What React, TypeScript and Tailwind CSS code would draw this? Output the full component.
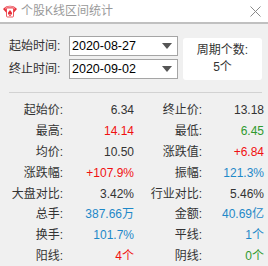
import React from 'react';

type Cell = { label: string; value: string; color: string };

const rows: [Cell, Cell][] = [
  [
    { label: '起始价:', value: '6.34', color: 'text-[#333333]' },
    { label: '终止价:', value: '13.18', color: 'text-[#333333]' },
  ],
  [
    { label: '最高:', value: '14.14', color: 'text-[#f01010]' },
    { label: '最低:', value: '6.45', color: 'text-[#2f9a2f]' },
  ],
  [
    { label: '均价:', value: '10.50', color: 'text-[#333333]' },
    { label: '涨跌值:', value: '+6.84', color: 'text-[#f01010]' },
  ],
  [
    { label: '涨跌幅:', value: '+107.9%', color: 'text-[#f01010]' },
    { label: '振幅:', value: '121.3%', color: 'text-[#1e88c8]' },
  ],
  [
    { label: '大盘对比:', value: '3.42%', color: 'text-[#333333]' },
    { label: '行业对比:', value: '5.46%', color: 'text-[#333333]' },
  ],
  [
    { label: '总手:', value: '387.66万', color: 'text-[#1e88c8]' },
    { label: '金额:', value: '40.69亿', color: 'text-[#1e88c8]' },
  ],
  [
    { label: '换手:', value: '101.7%', color: 'text-[#1e88c8]' },
    { label: '平线:', value: '1个', color: 'text-[#1e88c8]' },
  ],
  [
    { label: '阳线:', value: '4个', color: 'text-[#f01010]' },
    { label: '阴线:', value: '0个', color: 'text-[#2f9a2f]' },
  ],
];

const AppIcon = () => (
  <svg width="16" height="16" viewBox="0 0 16 16">
    <path d="M8 14 L1 6 A9 9 0 0 1 15 6 Z" fill="#e8303a" />
    <path d="M8 14 L3 5 A7 7 0 0 1 13 5 Z" fill="#f6a0a6" />
    <rect x="4.5" y="5" width="7" height="9" rx="1" fill="#ffffff" stroke="#e8303a" strokeWidth="0.8" />
    <path d="M8 7 C9 8.5 10.5 9.5 10 11 C9.6 12 8.5 11.8 8 11 C7.5 11.8 6.4 12 6 11 C5.5 9.5 7 8.5 8 7 Z" fill="#e8303a" />
    <path d="M8 11 L7 13 L9 13 Z" fill="#e8303a" />
  </svg>
);

const DateBox = ({ value }: { value: string }) => (
  <div className="w-[109px] h-[20px] bg-white border border-[#a5a5a5] flex items-center pl-[2px] pr-[5px]">
    <span className="flex-1 text-[12.5px] text-black leading-none">{value}</span>
    <svg width="10" height="6" viewBox="0 0 10 6">
      <path d="M0 0 L10 0 L5 6 Z" fill="#555555" />
    </svg>
  </div>
);

export default function App() {
  return (
    <div
      className="w-[268px] h-[266px] bg-[#f0f0f0] overflow-hidden"
      style={{ fontFamily: '"Liberation Sans", "Noto Sans CJK SC", sans-serif' }}
    >
      <div className="h-[22px] bg-white flex items-center pl-[2px] pr-[7px]">
        <AppIcon />
        <span className="ml-[3px] text-[12px] text-[#9a9a9a] flex-1">个股K线区间统计</span>
        <svg width="11" height="11" viewBox="0 0 11 11">
          <path d="M0.5 0.5 L10.5 10.5 M10.5 0.5 L0.5 10.5" stroke="#8a8a8a" strokeWidth="1" />
        </svg>
      </div>
      <div className="h-[2px] bg-[#c0c0c0]" />

      <div className="flex pt-[12px] pl-[9px] pr-[6px]">
        <div className="flex flex-col gap-[3px]">
          <div className="flex items-center">
            <span className="w-[60px] text-[12px] text-[#333333]">起始时间:</span>
            <DateBox value="2020-08-27" />
          </div>
          <div className="flex items-center">
            <span className="w-[60px] text-[12px] text-[#333333]">终止时间:</span>
            <DateBox value="2020-09-02" />
          </div>
        </div>
        <div className="ml-[5px] mt-[2px] w-[79px] h-[42px] bg-white rounded-[3px] flex flex-col items-center justify-center gap-[2px] text-[12px] text-[#333333] leading-[15px]">
          <span>周期个数:</span>
          <span>5个</span>
        </div>
      </div>

      <div className="mt-[12px] ml-[9px] mr-[6px] h-px bg-[#d2d2d2]" />

      <div className="mt-[7px] grid grid-cols-[63px_71px_68px_62px] text-[12px]">
        {rows.map(([a, b]) => (
          <React.Fragment key={a.label}>
            <div className="h-[20.8px] flex items-center justify-end text-[#333333]">{a.label}</div>
            <div className={`h-[20.8px] flex items-center justify-end ${a.color}`}>{a.value}</div>
            <div className="h-[20.8px] flex items-center justify-end text-[#333333]">{b.label}</div>
            <div className={`h-[20.8px] flex items-center justify-end ${b.color}`}>{b.value}</div>
          </React.Fragment>
        ))}
      </div>
    </div>
  );
}
